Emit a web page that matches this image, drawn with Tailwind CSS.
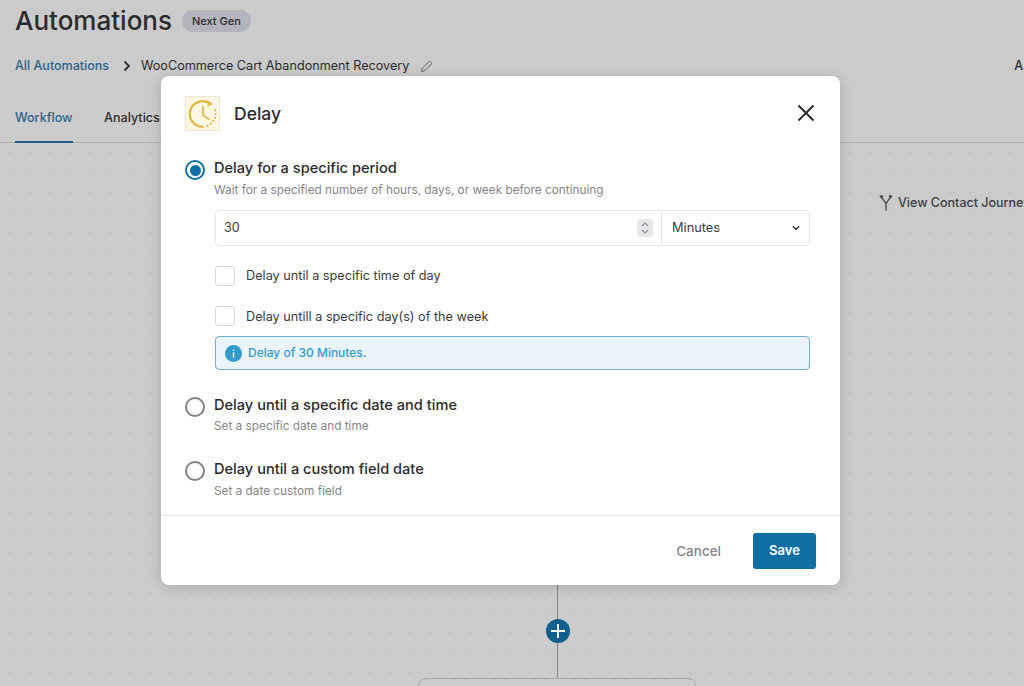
<!DOCTYPE html>
<html>
  <head>
    <title>Delay</title>
    <script src="https://cdn.jsdelivr.net/npm/@tailwindcss/browser@4"></script>
  </head>
  <body class="relative h-[686px] w-[1024px] overflow-hidden bg-[#cbcbcb] font-['Inter',sans-serif] text-[#2b2b2d]">
    <!-- page behind the dialog -->
    <div class="flex items-center gap-[10px] pl-[15px] pt-[4px]">
      <h1 class="text-[26px] leading-[34px] font-medium">Automations</h1>
      <span class="rounded-full bg-[#b4b4bc] px-[10px] py-[3px] text-[11px] leading-[16px] font-medium">Next Gen</span>
    </div>
    <div class="flex items-center pl-[15px] pr-[1px] pt-[18px] text-[12.500px] leading-[20px]">
      <span class="font-medium text-[#2b6488]">All Automations</span>
      <svg class="ml-[14px] mr-[10px]" width="8" height="12" viewBox="0 0 8 12" fill="none" stroke="#2b2b2d" stroke-width="1.800"><path d="M1.500 1.500 6 6l-4.500 4.500"/></svg>
      <span class="text-[12.640px]">WooCommerce Cart Abandonment Recovery</span>
      <svg class="ml-[11px]" width="13" height="13" viewBox="0 0 13 13" fill="none" stroke="#666" stroke-width="1"><path d="M1.500 11.500l.6-3L9 1.600a1 1 0 0 1 1.400 0l1 1a1 1 0 0 1 0 1.400L4.500 10.900z"/></svg>
      <span class="ml-auto font-medium">A</span>
    </div>
    <div class="mt-[16px] h-[51px] border-b border-[#b0b0b0] pl-[15px]">
      <div class="flex gap-[31px] text-[12.600px] leading-[20px] font-medium">
        <span class="h-[51px] w-[58px] border-b-2 border-[#1f5f85] pt-[16px] text-[#2b6488]">Workflow</span>
        <span class="pt-[16px]">Analytics</span>
      </div>
    </div>
    <div class="h-[543px] bg-[radial-gradient(#c1c1c1_1px,transparent_1px)] bg-[size:20px_20px]">
      <div class="flex pl-[879px] pt-[50px]">
        <div class="flex shrink-0 items-center gap-[5px] whitespace-nowrap text-[12.500px] leading-[20px] font-medium text-[#3c3c40]">
          <svg class="shrink-0" width="14" height="18" viewBox="0 0 14 18" fill="none" stroke="#444" stroke-width="1.300"><path d="M2.500 3 7 9.500 11.500 3M7 9.500V16.500M2.500 1v3.500M.8 2.500h3.400M11.500 1v3.500M9.800 2.500h3.400"/></svg>
          View Contact Journey
        </div>
      </div>
    </div>

    <!-- connector below the dialog -->
    <div class="absolute left-[557px] top-[580px] h-[98px] w-px bg-[#858585]"></div>
    <div class="absolute left-[546px] top-[619px] flex h-[24px] w-[24px] items-center justify-center rounded-full bg-[#0f5f8c]">
      <svg width="14" height="14" viewBox="0 0 14 14" stroke="#fff" stroke-width="1.800"><path d="M7 0v14M0 7h14"/></svg>
    </div>
    <div class="absolute left-[418px] top-[678px] h-[40px] w-[278px] rounded-lg border border-[#a8a8a8]"></div>

    <!-- dialog -->
    <div class="absolute left-[161px] top-[76px] flex h-[509px] w-[679px] flex-col rounded-lg bg-white shadow-[0_2px_14px_rgba(0,0,0,0.16)]">
      <div class="flex items-center pl-[24px] pr-[24px] pt-[20px]">
        <div class="flex h-[35px] w-[35px] items-center justify-center border border-[#eee7d3] bg-[#fdf7e3]">
          <svg width="32" height="32" viewBox="0 0 30 30" fill="none" stroke="#e3b43c" stroke-width="2" stroke-linecap="round">
            <path d="M22 5.500A12 12 0 1 0 15 27"/>
            <path d="M20 3.500l2.500 2-2.800 1.500" stroke-width="1.500"/>
            <path d="M15 8v8l5.500 4" stroke-width="1.600"/>
            <path d="M26.500 11.500v.01M27 15v.01M26.300 18.500v.01M24.600 21.500v.01M22.200 24v.01M19.300 26v.01" stroke-width="2"/>
          </svg>
        </div>
        <h2 class="ml-[14px] text-[17.500px] leading-[35px] font-medium">Delay</h2>
        <svg class="ml-auto mr-[1px] -translate-y-[1px]" width="18" height="18" viewBox="0 0 18 18" stroke="#2b2b2d" stroke-width="2"><path d="M1.500 1.500l15 15M16.500 1.500l-15 15"/></svg>
      </div>

      <div class="flex-1 pl-[24px] pr-[30px] pt-[27px]">
        <div class="flex gap-[9px]">
          <span class="mt-[2px] flex h-[20px] w-[20px] shrink-0 items-center justify-center rounded-full border-[2.500px] border-[#0f6fa3]">
            <span class="h-[11px] w-[11px] rounded-full bg-[#0f6fa3]"></span>
          </span>
          <div>
            <p class="text-[14.600px] leading-[20px] font-medium">Delay for a specific period</p>
            <p class="mt-[4px] text-[11.800px] leading-[16px] text-[#85858a]">Wait for a specified number of hours, days, or week before continuing</p>
          </div>
        </div>

        <div class="ml-[30px] mt-[12px] flex h-[36px] rounded border border-[#e5e5e8] text-[12.500px] text-[#3c3c40]">
          <div class="flex flex-1 items-center border-r border-[#e5e5e8] pl-[8px] pr-[8px]">
            <span>30</span>
            <span class="ml-auto flex h-[18px] w-[16px] items-center justify-center rounded-sm bg-[#e6e6ea]">
              <svg width="8" height="14" viewBox="0 0 8 14" fill="none" stroke="#8a8a90" stroke-width="1.200"><path d="M1 5l3-3 3 3M1 9l3 3 3-3"/></svg>
            </span>
          </div>
          <div class="flex w-[147px] items-center pl-[10px] pr-[9px]">
            <span class="text-[12.800px]">Minutes</span>
            <svg class="ml-auto" width="8" height="6" viewBox="0 0 8 6" fill="none" stroke="#3c3c40" stroke-width="1.500"><path d="M.8 1.200 4 4.400l3.200-3.200"/></svg>
          </div>
        </div>

        <div class="ml-[30px] mt-[20px] flex h-[20px] items-center gap-[11px] text-[12.700px] text-[#3c3c40]">
          <span class="h-[20px] w-[20px] rounded-[3px] border border-[#d8d8dc]"></span>
          <span>Delay until a specific time of day</span>
        </div>
        <div class="ml-[30px] mt-[20px] flex h-[20px] items-center gap-[11px] text-[12.700px] text-[#3c3c40]">
          <span class="h-[20px] w-[20px] rounded-[3px] border border-[#d8d8dc]"></span>
          <span class="pt-[1px]">Delay untill a specific day(s) of the week</span>
        </div>

        <div class="ml-[30px] mt-[10px] flex h-[34px] items-center gap-[6px] rounded-sm border border-[#6fb0cf] bg-[#ebf4f9] pl-[9px] text-[12px] font-medium text-[#2f9ccb]">
          <svg width="17" height="17" viewBox="0 0 17 17"><circle cx="8.500" cy="8.500" r="8.500" fill="#2f9ccb"/><path d="M8.500 7.500v5M8.500 4.500v1.300" stroke="#fff" stroke-width="1.400"/></svg>
          <span>Delay of 30 Minutes.</span>
        </div>

        <div class="mt-[25px] flex gap-[9px]">
          <span class="mt-[2px] h-[20px] w-[20px] shrink-0 rounded-full border-[2.500px] border-[#808085]"></span>
          <div>
            <p class="text-[14.600px] leading-[20px] font-medium">Delay until a specific date and time</p>
            <p class="mt-[3px] text-[11.800px] leading-[16px] text-[#85858a]">Set a specific date and time</p>
          </div>
        </div>
        <div class="mt-[25px] flex gap-[9px]">
          <span class="mt-[2px] h-[20px] w-[20px] shrink-0 rounded-full border-[2.500px] border-[#808085]"></span>
          <div>
            <p class="text-[14.600px] leading-[20px] font-medium">Delay until a custom field date</p>
            <p class="mt-[4px] text-[11.800px] leading-[16px] text-[#85858a]">Set a date custom field</p>
          </div>
        </div>
      </div>

      <div class="flex h-[70px] items-center justify-end gap-[32px] border-t border-[#e3e3e6] pr-[24px]">
        <span class="pt-[1px] text-[13.500px] font-medium text-[#85858a]">Cancel</span>
        <span class="flex h-[36px] w-[63px] items-center justify-center rounded-[3px] bg-[#0f6fa3] text-[13px] font-semibold text-white">Save</span>
      </div>
    </div>
  </body>
</html>
